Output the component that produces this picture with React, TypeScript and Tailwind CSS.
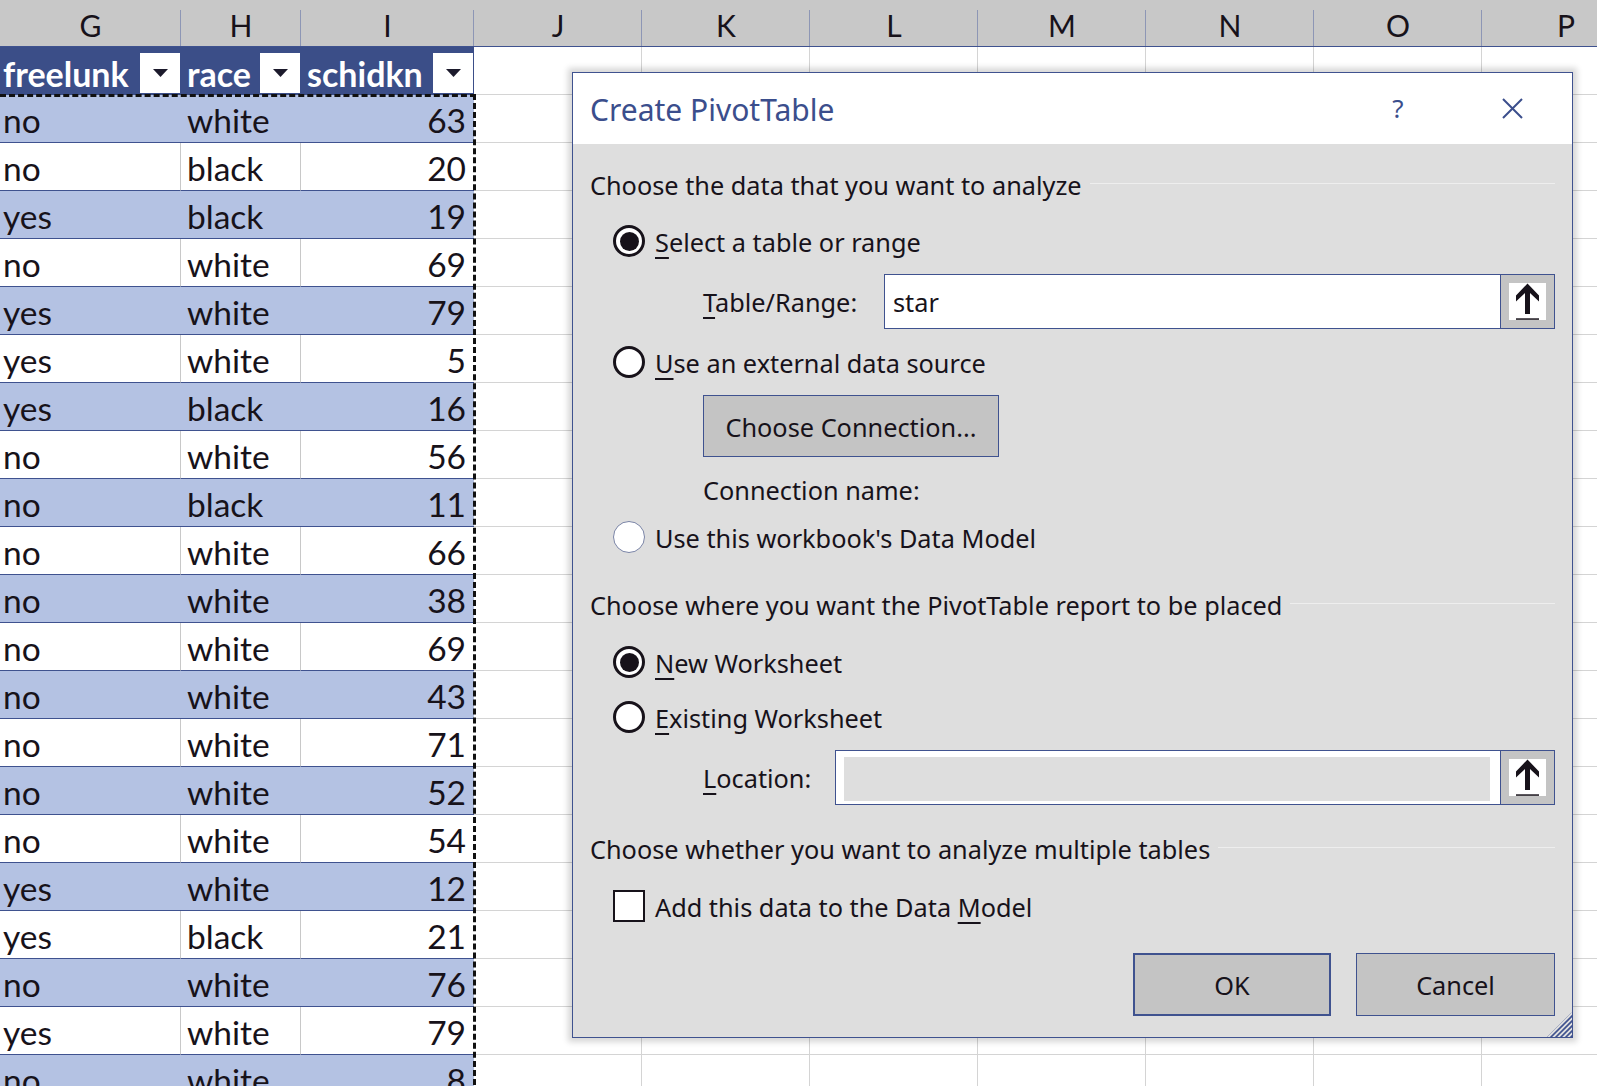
import React from "react";

// Excel sheet with a "Create PivotTable" dialog on top.

const COLS = [
  { key: "G", w: "w-[181px]" },
  { key: "H", w: "w-[120px]" },
  { key: "I", w: "w-[173px]" },
  { key: "J", w: "w-[168px]" },
  { key: "K", w: "w-[168px]" },
  { key: "L", w: "w-[168px]" },
  { key: "M", w: "w-[168px]" },
  { key: "N", w: "w-[168px]" },
  { key: "O", w: "w-[168px]" },
  { key: "P", w: "w-[168px]" },
];

const ROWS: [string, string, number][] = [
  ["no", "white", 63],
  ["no", "black", 20],
  ["yes", "black", 19],
  ["no", "white", 69],
  ["yes", "white", 79],
  ["yes", "white", 5],
  ["yes", "black", 16],
  ["no", "white", 56],
  ["no", "black", 11],
  ["no", "white", 66],
  ["no", "white", 38],
  ["no", "white", 69],
  ["no", "white", 43],
  ["no", "white", 71],
  ["no", "white", 52],
  ["no", "white", 54],
  ["yes", "white", 12],
  ["yes", "black", 21],
  ["no", "white", 76],
  ["yes", "white", 79],
  ["no", "white", 8],
];

const EMPTY = COLS.slice(3);

function FilterButton() {
  return (
    <span className="ml-auto mr-[1px] mt-[4px] flex h-[40px] w-[40px] shrink-0 items-center justify-center bg-white">
      <svg width="15" height="8" viewBox="0 0 15 8">
        <polygon points="0,0 15,0 7.5,8" fill="#1c1a2c" />
      </svg>
    </span>
  );
}

function EmptyCells() {
  return (
    <>
      {EMPTY.map((c) => (
        <div
          key={c.key}
          className={`${c.w} h-full shrink-0 border-r border-b border-[#d4d4d4] bg-white`}
        />
      ))}
    </>
  );
}

function Sheet() {
  return (
    <div className="font-['Lato',sans-serif] text-[#17121a]">
      {/* column letters */}
      <div className="flex h-[47px] border-b border-[#3f528f] bg-[#c8c8c8]">
        {COLS.map((c) => (
          <div
            key={c.key}
            className={`${c.w} relative flex h-full shrink-0 items-center justify-center pt-[4px] text-[30px]`}
          >
            {c.key}
            <span className="absolute right-0 bottom-0 h-[36px] w-px bg-[#8d96b5]" />
          </div>
        ))}
      </div>

      {/* table header */}
      <div className="flex h-[48px]">
        {[
          { w: "w-[181px]", label: "freelunk", pl: "pl-[3px]" },
          { w: "w-[120px]", label: "race", pl: "pl-[6px]" },
          { w: "w-[173px]", label: "schidkn", pl: "pl-[6px]" },
        ].map((h) => (
          <div
            key={h.label}
            className={`${h.w} ${h.pl} flex h-full shrink-0 items-center bg-[#3b4e88] text-[34px] font-bold text-white`}
          >
            <span className="pt-[4px]">{h.label}</span>
            <FilterButton />
          </div>
        ))}
        <EmptyCells />
      </div>

      {/* data rows */}
      {ROWS.map(([a, b, n], i) => {
        const band = i % 2 === 0;
        return (
          <div key={i} className="flex h-[48px]">
            <div
              className={
                band
                  ? "flex h-full w-[181px] shrink-0 items-center border-b border-[#3f528f] bg-[#b4c2e3] pt-[4px] pl-[3px] text-[33.5px]"
                  : "flex h-full w-[181px] shrink-0 items-center border-r border-b border-r-[#c8c8c8] border-b-[#3f528f] bg-white pt-[4px] pl-[3px] text-[33.5px]"
              }
            >
              {a}
            </div>
            <div
              className={
                band
                  ? "flex h-full w-[120px] shrink-0 items-center border-b border-[#3f528f] bg-[#b4c2e3] pt-[4px] pl-[6px] text-[33.5px]"
                  : "flex h-full w-[120px] shrink-0 items-center border-r border-b border-r-[#c8c8c8] border-b-[#3f528f] bg-white pt-[4px] pl-[6px] text-[33.5px]"
              }
            >
              {b}
            </div>
            <div
              className={
                band
                  ? "flex h-full w-[173px] shrink-0 items-center justify-end border-b border-[#3f528f] bg-[#b4c2e3] pt-[4px] pr-[8px] text-[33.5px]"
                  : "flex h-full w-[173px] shrink-0 items-center justify-end border-b border-[#3f528f] bg-white pt-[4px] pr-[8px] text-[33.5px]"
              }
            >
              {n}
            </div>
            <EmptyCells />
          </div>
        );
      })}
    </div>
  );
}

function Radio({ checked, dim }: { checked?: boolean; dim?: boolean }) {
  return (
    <span
      className={
        dim
          ? "flex h-[32px] w-[32px] shrink-0 items-center justify-center rounded-full border-[1.5px] border-[#7a84a6] bg-white"
          : "flex h-[32px] w-[32px] shrink-0 items-center justify-center rounded-full border-[3px] border-[#17121a] bg-white"
      }
    >
      {checked && <span className="h-[19px] w-[19px] rounded-full bg-[#17121a]" />}
    </span>
  );
}

function Heading({ children, mt }: { children: React.ReactNode; mt: string }) {
  return (
    <div className={`${mt} flex h-[36px] items-center pr-[17px] pl-[17px]`}>
      <span className="whitespace-nowrap pt-[3px]">{children}</span>
      <span className="mt-[-2px] ml-[8px] h-px flex-1 bg-[#eeeeee]" />
    </div>
  );
}

function RefButton() {
  return (
    <div className="flex h-full w-[55px] shrink-0 items-center justify-center border border-[#3f528f] bg-[#c4c4c4]">
      <svg width="37" height="37" viewBox="0 0 37 37">
        <rect width="37" height="37" fill="#fff" />
        <polygon
          points="18.5,0.5 30,12.5 30,18.5 21,10 21,31 16,31 16,10 7,18.5 7,12.5"
          fill="#17121a"
        />
        <rect x="7" y="35.3" width="23" height="1.5" fill="#17121a" />
      </svg>
    </div>
  );
}

function Dialog() {
  return (
    <div className="absolute top-[72px] left-[572px] flex h-[966px] w-[1001px] flex-col border border-[#3f528f] bg-[#dedede] font-['Noto_Sans',sans-serif] text-[25.3px] text-[#17121a] shadow-[0_0_6px_4px_rgba(0,0,0,0.16)]">
      {/* title bar */}
      <div className="flex h-[71px] shrink-0 items-center bg-white">
        <span className="flex-1 pt-[2px] pl-[17px] text-[30px] text-[#3b4e8c]">Create PivotTable</span>
        <span className="w-[40px] text-center text-[26px] text-[#3b4e8c]">?</span>
        <span className="mr-[36px] ml-[70px] flex w-[48px] justify-center">
          <svg width="21" height="21" viewBox="0 0 21 21">
            <path d="M1 1 L20 20 M20 1 L1 20" stroke="#3b4e8c" strokeWidth="2" />
          </svg>
        </span>
      </div>

      <Heading mt="mt-[22px]">Choose the data that you want to analyze</Heading>

      <div className="mt-[21px] flex h-[36px] items-center gap-[10px] pl-[40px]">
        <Radio checked />
        <span className="pt-[3px]">
          <u className="underline-offset-[5px]">S</u>elect a table or range
        </span>
      </div>

      <div className="mt-[15px] flex h-[55px] items-center pr-[17px] pl-[130px]">
        <span className="w-[181px] pt-[3px]">
          <u className="underline-offset-[5px]">T</u>able/Range:
        </span>
        <div className="flex h-full flex-1">
          <div className="flex flex-1 items-center border border-r-0 border-[#3f528f] bg-white pt-[2px] pl-[8px]">
            star
          </div>
          <RefButton />
        </div>
      </div>

      <div className="mt-[15px] flex h-[36px] items-center gap-[10px] pl-[40px]">
        <Radio />
        <span className="pt-[3px]">
          <u className="underline-offset-[5px]">U</u>se an external data source
        </span>
      </div>

      <div className="mt-[15px] flex h-[62px] pl-[130px]">
        <div className="flex w-[296px] items-center justify-center border border-[#3f528f] bg-[#c4c4c4] pt-[3px]">
          Choose Connection...
        </div>
      </div>

      <div className="mt-[14px] flex h-[36px] items-center pt-[3px] pl-[130px]">Connection name:</div>

      <div className="mt-[12px] flex h-[36px] items-center gap-[10px] pl-[40px]">
        <Radio dim />
        <span className="pt-[3px]">Use this workbook's Data Model</span>
      </div>

      <Heading mt="mt-[31px]">Choose where you want the PivotTable report to be placed</Heading>

      <div className="mt-[22px] flex h-[36px] items-center gap-[10px] pl-[40px]">
        <Radio checked />
        <span className="pt-[3px]">
          <u className="underline-offset-[5px]">N</u>ew Worksheet
        </span>
      </div>

      <div className="mt-[19px] flex h-[36px] items-center gap-[10px] pl-[40px]">
        <Radio />
        <span className="pt-[3px]">
          <u className="underline-offset-[5px]">E</u>xisting Worksheet
        </span>
      </div>

      <div className="mt-[15px] flex h-[55px] items-center pr-[17px] pl-[130px]">
        <span className="w-[132px] pt-[3px]">
          <u className="underline-offset-[5px]">L</u>ocation:
        </span>
        <div className="flex h-full flex-1">
          <div className="flex flex-1 border border-r-0 border-[#3f528f] bg-white pt-[6px] pr-[10px] pb-[3px] pl-[8px]">
            <div className="flex-1 bg-[#dedede]" />
          </div>
          <RefButton />
        </div>
      </div>

      <Heading mt="mt-[25px]">Choose whether you want to analyze multiple tables</Heading>

      <div className="mt-[22px] flex h-[36px] items-center gap-[10px] pl-[40px]">
        <span className="h-[32px] w-[32px] shrink-0 border-[2.5px] border-[#17121a] bg-white" />
        <span className="pt-[3px]">
          Add this data to the Data <u className="underline-offset-[5px]">M</u>odel
        </span>
      </div>

      <div className="mt-[29px] flex h-[63px] justify-end gap-[25px] pr-[17px]">
        <div className="flex w-[198px] items-center justify-center border-2 border-[#3f528f] bg-[#c4c4c4] pt-[3px]">OK</div>
        <div className="flex w-[199px] items-center justify-center border border-[#3f528f] bg-[#c4c4c4] pt-[3px]">Cancel</div>
      </div>

      {/* resize grip */}
      <svg className="absolute right-0 bottom-0" width="25" height="25" viewBox="0 0 25 25">
        <defs>
          <clipPath id="grip">
            <polygon points="25,0 25,25 0,25" />
          </clipPath>
        </defs>
        <g clipPath="url(#grip)" stroke="#3f528f" strokeWidth="1.6">
          <path d="M0 29 L29 0 M5 29 L34 0 M10 29 L39 0 M15 29 L44 0 M20 29 L49 0 M-5 29 L24 0" />
        </g>
      </svg>
    </div>
  );
}

export default function App() {
  return (
    <div className="relative h-[1086px] w-[1597px] overflow-hidden bg-white">
      <Sheet />
      {/* copy marquee around the table range */}
      <div className="pointer-events-none absolute top-[94px] left-0 h-[1000px] w-[476px] border-t-[3px] border-r-[3px] border-dashed border-[#111]" />
      <Dialog />
    </div>
  );
}
